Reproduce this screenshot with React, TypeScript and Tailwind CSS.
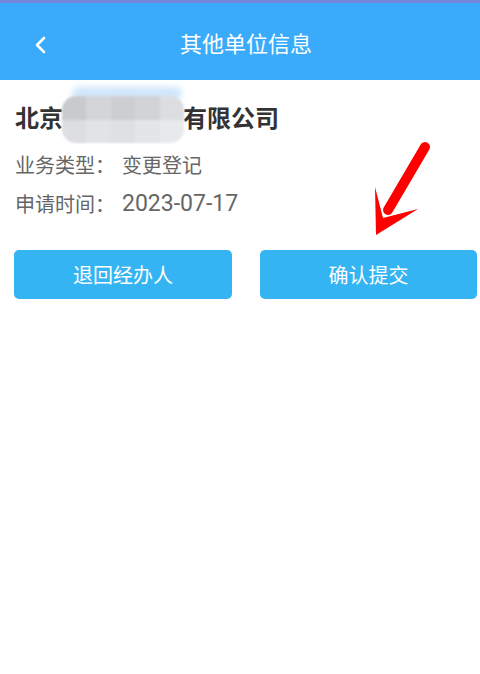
import React from "react";

export default function App() {
  const font = { fontFamily: '"Noto Sans CJK SC", "Noto Sans", sans-serif' };
  return (
    <div className="relative w-[480px] h-[674px] bg-white overflow-hidden" style={font}>
      <div className="h-[3px] bg-[#7386d8]" />
      <div className="relative h-[77px] bg-[#3aabfb] flex items-center justify-center">
        <svg className="absolute left-[33px] top-[32px]" width="16" height="20" viewBox="0 0 16 20">
          <path d="M11 3 L4 10 L11 17" fill="none" stroke="white" strokeWidth="2.6" strokeLinecap="round" strokeLinejoin="round" />
        </svg>
        <span className="text-white text-[22px] leading-none ml-[12px]">其他单位信息</span>
      </div>
      <div className="px-[15px] pt-[20px]">
        <div className="text-[24px] font-bold text-[#333] leading-[34px]">北京市某某科技有限公司</div>
        <div className="mt-[18px] flex items-center h-[26px] text-[20px] text-[#666] leading-[26px]">
          <span>业务类型：</span>
          <span className="ml-[7px]">变更登记</span>
        </div>
        <div className="mt-[13px] flex items-center h-[26px] text-[20px] text-[#666] leading-[26px]">
          <span>申请时间：</span>
          <span className="ml-[7px] text-[23px]" style={{ fontFamily: 'Roboto, "Noto Sans", sans-serif' }}>2023-07-17</span>
        </div>
      </div>
      <div className="flex pl-[14px] pr-[3px] gap-[28px] mt-[33px]">
        <button className="w-[218px] h-[49px] rounded-[5px] bg-[#34b4f2] text-white text-[20px]">退回经办人</button>
        <button className="w-[217px] h-[49px] rounded-[5px] bg-[#34b4f2] text-white text-[20px]">确认提交</button>
      </div>
      {/* blur mask */}
      <div className="absolute left-[72px] top-[87px] w-[110px] h-[14px] rounded-full bg-[#cfe6fb] blur-[3px]" />
      <div className="absolute left-[62px] top-[96px] w-[122px] h-[47px] rounded-[14px] overflow-hidden blur-[1px] grid grid-cols-5 grid-rows-2">
        <div className="bg-[#c9cace]" />
        <div className="bg-[#d4d5d8]" />
        <div className="bg-[#cdced2]" />
        <div className="bg-[#d2d3d6]" />
        <div className="bg-[#dcdde0]" />
        <div className="bg-[#dddee1]" />
        <div className="bg-[#e2e3e6]" />
        <div className="bg-[#dfe0e3]" />
        <div className="bg-[#e4e5e7]" />
        <div className="bg-[#e8e9eb]" />
      </div>
      {/* red arrow */}
      <svg className="absolute left-0 top-0 pointer-events-none" width="480" height="674">
        <line x1="425" y1="147" x2="388" y2="210" stroke="#ff0000" strokeWidth="10" strokeLinecap="round" />
        <path d="M375 187 L383 218 L418 209 L376 235 Z" fill="#ff0000" />
      </svg>
    </div>
  );
}
